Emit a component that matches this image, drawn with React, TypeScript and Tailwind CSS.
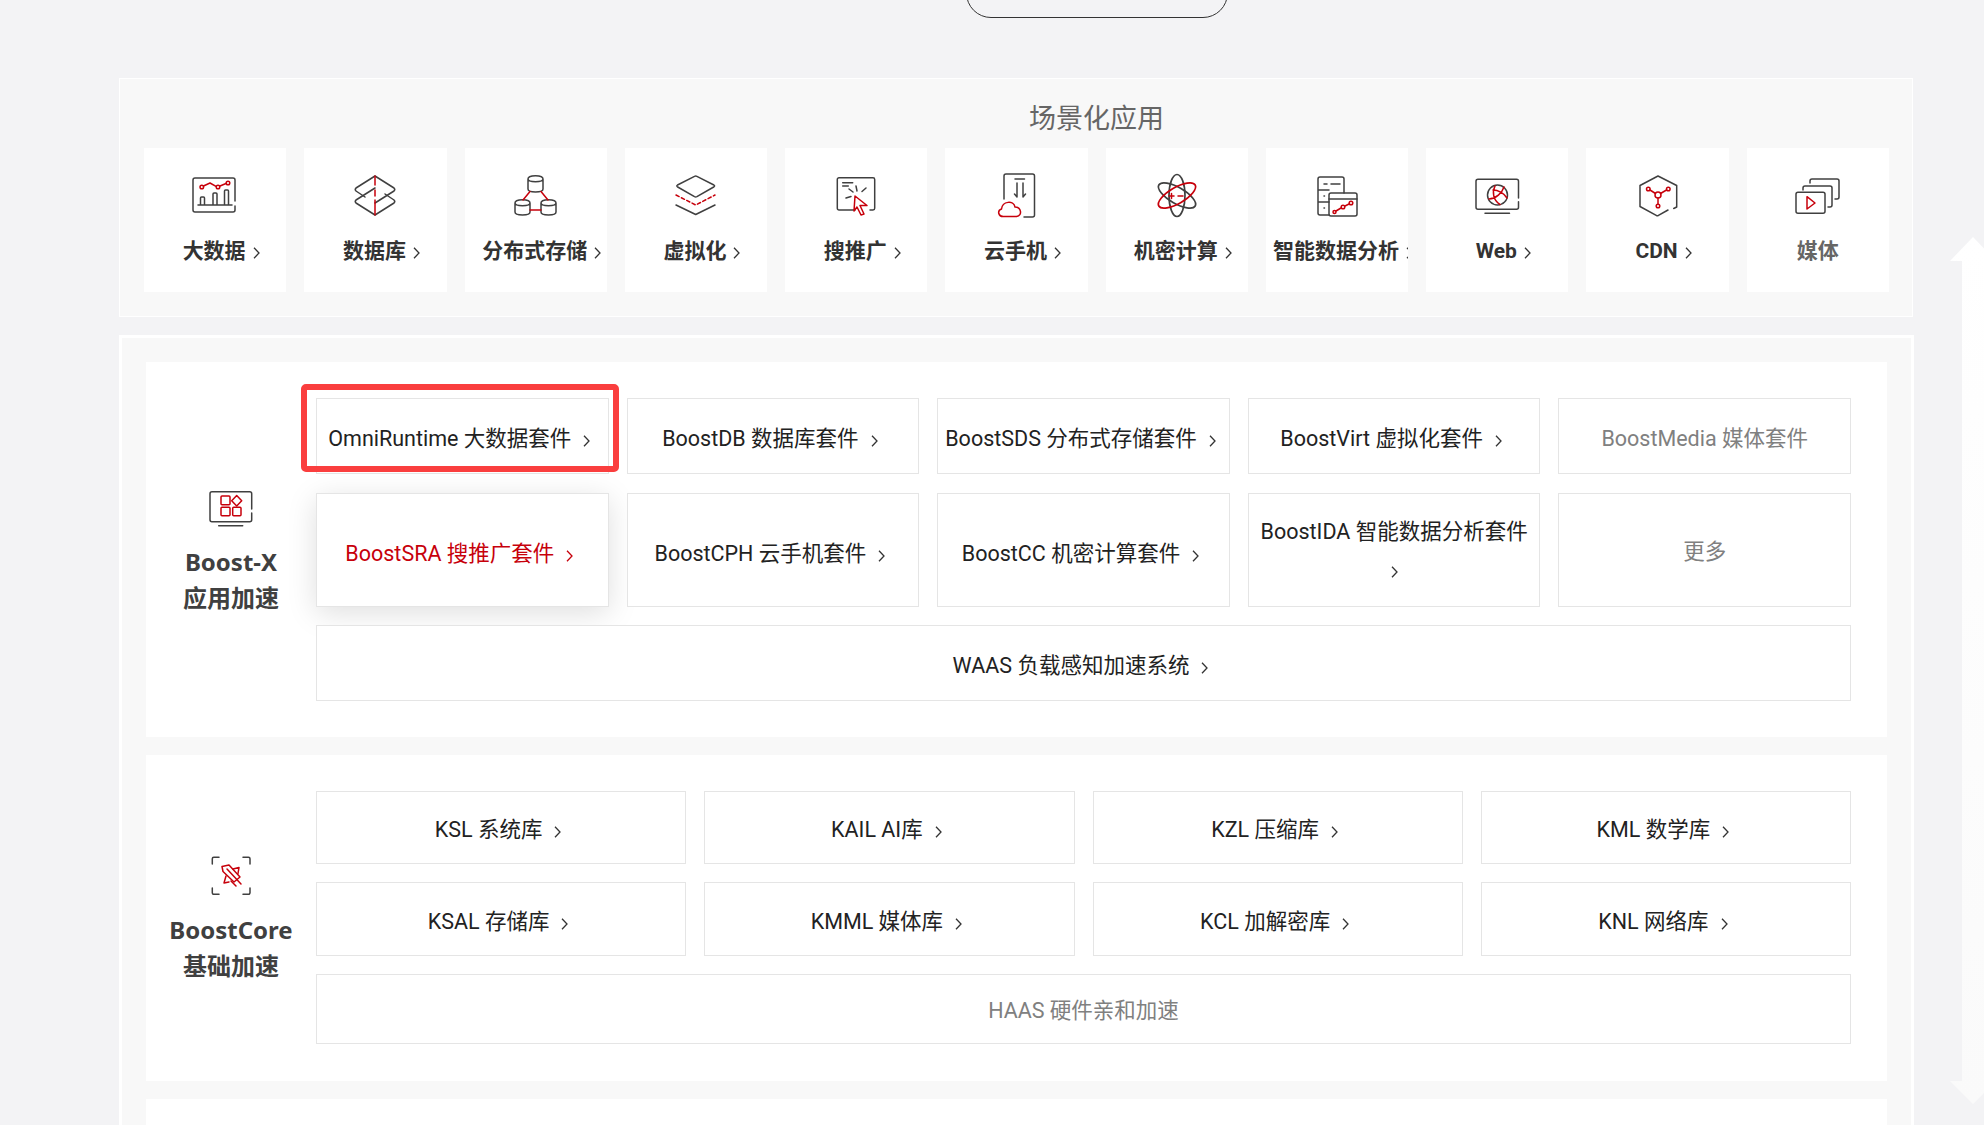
import type { ReactNode } from "react";

const DARK = "#404040";
const RED = "#c7000b";

function Icon({ children }: { children: ReactNode }) {
  return (
    <svg width="48" height="48" viewBox="0 0 48 48" fill="none" stroke={DARK} strokeWidth="1.5" strokeLinecap="round" strokeLinejoin="round">
      {children}
    </svg>
  );
}

const icons: Record<string, ReactNode> = {
  bigdata: (
    <Icon>
      <path d="M44 30V9a2 2 0 0 0-2-2H4a2 2 0 0 0-2 2v30a2 2 0 0 0 2 2h38a2 2 0 0 0 2-2v-4" />
      <path d="M7 34h34M9.500 34v-7a1 1 0 0 1 1-1h2a1 1 0 0 1 1 1v7M22 34V23a1 1 0 0 1 1-1h2a1 1 0 0 1 1 1v11M33.500 34V20a1 1 0 0 1 1-1h2a1 1 0 0 1 1 1v14" />
      <g stroke={RED}>
        <path d="M12.500 15 19 12l6 3.300M29 15l6-2.500" />
        <circle cx="10.800" cy="16" r="1.800" />
        <circle cx="27" cy="16" r="1.800" />
        <circle cx="37" cy="12" r="1.800" />
      </g>
    </Icon>
  ),
  database: (
    <Icon>
      <path d="M24 5 43 17q1.500 1.500 0 3L24 32M24 5 5 17q-1.500 1.500 0 3l9 6" />
      <path d="M24 44 43 32q1.500-1.500 0-3l-9-6M24 44 5 32q-1.500-1.500 0-3l19-12" />
      <path d="M24 5v9M24 19v6M24 29v15" stroke={RED} />
    </Icon>
  ),
  storage: (
    <Icon>
      <path d="M16 8c0-4.500 15-4.500 15 0v10c0 4-15 4-15 0zM16 8c0 3.500 15 3.500 15 0" />
      <path d="M3 32c0-4.500 15-4.500 15 0v9c0 4-15 4-15 0zM3 32c0 3.500 15 3.500 15 0" />
      <path d="M29 32c0-4.500 15-4.500 15 0v9c0 4-15 4-15 0zM29 32c0 3.500 15 3.500 15 0" />
      <path d="m11 29 7-8.500M36 29l-7-8.500M18 39h11" stroke={RED} />
    </Icon>
  ),
  virtual: (
    <Icon>
      <path d="M22.500 5.300q1.200-.6 2.400 0l17 8.700q1.500 1-.2 2l-16.800 9.600q-1.200.6-2.400 0L5.700 16q-1.700-1-.2-2z" />
      <path d="M4 24 23.700 34 43 24" stroke={RED} strokeDasharray="3.500 2.500" />
      <path d="m4 34 19.700 9.500L43 34" />
    </Icon>
  ),
  search: (
    <Icon>
      <path d="M23 39H7a1.700 1.700 0 0 1-1.700-1.700V8.400A1.700 1.700 0 0 1 7 6.700h34A1.700 1.700 0 0 1 42.700 8.400v28.900A1.700 1.700 0 0 1 41 39h-3" />
      <path d="M10.700 11.700h10M10.700 15h5.600M17 18l4 3M24 15l1 5M34 17l-4 3.500M14 27l5-1.500" />
      <path d="m23 25 12 9.500-7 0 4 8.500-3 1-4-8-3 4z" stroke={RED} />
    </Icon>
  ),
  phone: (
    <Icon>
      <path d="M12 28V5a2 2 0 0 1 2-2h26.500a2 2 0 0 1 2 2v39a2 2 0 0 1-2 2H32" />
      <path d="M23 8h9.500M25 12v14l-2.500-3M31 12v14l2.500-3" />
      <path d="M12 45.500c-6 .5-7-6-2.500-7.500 1-8 12-9 13.500-2 6 0 8 8.500 1.500 9.500z" stroke={RED} />
    </Icon>
  ),
  atom: (
    <Icon>
      <g strokeWidth="1.700">
        <ellipse cx="24" cy="24.500" rx="8" ry="21" />
        <ellipse cx="24" cy="24.500" rx="8" ry="21" transform="rotate(-60 24 24.500)" />
        <ellipse cx="24" cy="24.500" rx="8" ry="21" transform="rotate(60 24 24.500)" stroke={RED} />
      </g>
      <path d="M16 25h5M18.500 22.500v5M25 25h5" stroke={RED} />
    </Icon>
  ),
  analysis: (
    <Icon>
      <path d="M16 44H7a2 2 0 0 1-2-2V8a2 2 0 0 1 2-2h22a2 2 0 0 1 2 2v14M5 19h11M5 31h11M18 13h9M11 13h3M11 25h.500M11 37h.500" />
      <rect x="16" y="22" width="28" height="23" rx="2" />
      <path d="M16 28h28" />
      <g stroke={RED}>
        <path d="m23 40 5-3M32 35l4-2" />
        <circle cx="21.500" cy="41" r="1.500" />
        <circle cx="30" cy="36" r="1.800" />
        <circle cx="38" cy="32" r="1.800" />
      </g>
    </Icon>
  ),
  web: (
    <Icon>
      <path d="M45.500 27V10.300a2 2 0 0 0-2-2H5a2 2 0 0 0-2 2v26a2 2 0 0 0 2 2h38.500a2 2 0 0 0 2-2v-5.500M12 42.300h24.500" />
      <circle cx="24.500" cy="24" r="10" />
      <g stroke={RED}>
        <path d="M16 28c7-.5 13-6 15-12M22 15c-3 6-2 14 5 18.500M20 19c5 0 11 3 14 8" />
      </g>
    </Icon>
  ),
  cdn: (
    <Icon>
      <path d="M34 39 24 44.700a1.500 1.500 0 0 1-1.300 0L6 35.500V14.500L24 5 42.700 14.500v21.500l-3 1.500" />
      <g stroke={RED}>
        <circle cx="24" cy="24" r="3" />
        <circle cx="14.300" cy="18" r="1.800" />
        <circle cx="34.300" cy="18" r="1.800" />
        <circle cx="24" cy="35" r="1.800" />
        <path d="m16 19 5.500 3.500M32.500 19 26.500 22.500M24 27v6" />
      </g>
    </Icon>
  ),
  media: (
    <Icon>
      <rect x="2" y="21.300" width="29" height="21" rx="2" />
      <path d="M9 19v-2a2 2 0 0 1 2-2h25a2 2 0 0 1 2 2v17a2 2 0 0 1-2 2h-2" />
      <path d="M16 12v-2a2 2 0 0 1 2-2h25a2 2 0 0 1 2 2v16a2 2 0 0 1-2 2h-2" />
      <path d="M13 25.700 21 32l-8 6z" stroke={RED} />
    </Icon>
  ),
  boostx: (
    <Icon>
      <path d="M44.700 25V9.700a2 2 0 0 0-2-2H5a2 2 0 0 0-2 2v26a2 2 0 0 0 2 2h37.700a2 2 0 0 0 2-2V29M11.700 41.700h24" />
      <g stroke={RED}>
        <rect x="14" y="12" width="9" height="8.700" rx="1" />
        <rect x="14" y="23.300" width="9" height="8.400" rx="1" />
        <rect x="25.700" y="23.300" width="8.300" height="8.400" rx="1" />
        <path d="m29.700 11.500 5 5.200-5 5.200-5-5.200z" />
      </g>
    </Icon>
  ),
  boostcore: (
    <Icon>
      <path d="M5.300 12V6.800a1.500 1.500 0 0 1 1.500-1.500H12M36 5.300h5.500A1.500 1.500 0 0 1 43 6.800V12M5.300 36v4.800a1.500 1.500 0 0 0 1.500 1.500H12M36 42.300h5.500a1.500 1.500 0 0 0 1.500-1.500V36" />
      <g stroke={RED}>
        <path d="M15 14.500 22 13l11 12-6 5-11-10.500z" />
        <path d="m26 17 6-1.500-1 6M19 24l-2 7 5-1M20 17l14 15M24 29l5 5" />
      </g>
    </Icon>
  ),
};

function Chevron({ color = "#333333", className = "" }: { color?: string; className?: string }) {
  return (
    <svg width="7" height="12" viewBox="0 0 7 12" fill="none" stroke={color} strokeWidth="1.300" className={`inline-block align-[-1px] ${className}`}>
      <path d="m1 .800 5 5.200-5 5.200" />
    </svg>
  );
}

const scenes = [
  { name: "大数据", icon: "bigdata" },
  { name: "数据库", icon: "database" },
  { name: "分布式存储", icon: "storage" },
  { name: "虚拟化", icon: "virtual" },
  { name: "搜推广", icon: "search" },
  { name: "云手机", icon: "phone" },
  { name: "机密计算", icon: "atom" },
  { name: "智能数据分析", icon: "analysis", tight: true },
  { name: "Web", icon: "web" },
  { name: "CDN", icon: "cdn" },
  { name: "媒体", icon: "media", disabled: true },
];

function SceneCard({ name, icon, disabled, tight }: { name: string; icon: string; disabled?: boolean; tight?: boolean }) {
  return (
    <div className="flex h-[144px] flex-col items-center overflow-hidden bg-white pt-[23px]">
      {icons[icon]}
      <div className={`mt-[17px] w-full whitespace-nowrap text-center text-[21px] leading-[30px] font-bold ${disabled ? "text-[#666666]" : "text-[#333333]"} ${disabled ? "" : tight ? "pl-[7px]" : "pl-[12px]"}`}>
        {name}
        {!disabled && <Chevron className="ml-[7px]" />}
      </div>
    </div>
  );
}

function Item({ label, state, highlight, wrap, pad = "pt-[5px]" }: { label: string; state?: "off" | "active"; highlight?: boolean; wrap?: boolean; pad?: string }) {
  const off = state === "off";
  const active = state === "active";
  return (
    <div
      className={`relative flex items-center justify-center border border-[#e5e5e5] bg-white text-center text-[21.500px] ${pad} ${off || wrap ? "px-[8px]" : "pr-[11px] pl-[5px]"} ${wrap ? "leading-[38px]" : "leading-[28px]"} ${off ? "text-[#808080]" : active ? "text-[#c7000b] shadow-[0_6px_28px_rgba(0,0,0,0.13)]" : "text-[#222222]"}`}
    >
      {wrap ? (
        <span>
          {label}
          <br />
          <Chevron />
        </span>
      ) : (
        <span>
          {label}
          {!off && <Chevron color={active ? RED : "#333333"} className="ml-[12px]" />}
        </span>
      )}
      {highlight && (
        <div className="absolute top-[-15px] right-[-11px] bottom-[1px] left-[-16px] rounded-[5px] border-[6px] border-[#fa3e3e]" />
      )}
    </div>
  );
}

function SideLabel({ icon, title, sub }: { icon: string; title: string; sub: string }) {
  return (
    <div className="flex w-[170px] shrink-0 flex-col items-center justify-center">
      {icons[icon]}
      <div className="mt-[12px] text-center font-['Noto_Sans','Noto_Sans_CJK_SC',sans-serif] text-[24px] leading-[36px] font-bold text-[#404040]">
        <div>{title}</div>
        <div>{sub}</div>
      </div>
    </div>
  );
}

function ScrollArrow() {
  return (
    <svg width="46" height="867" viewBox="0 0 46 867" className="absolute top-[237px] left-[1950px]">
      <defs>
        <linearGradient id="arrow" x1="0" y1="0" x2="0" y2="1">
          <stop offset="0" stopColor="#ffffff" />
          <stop offset="1" stopColor="#fafafa" />
        </linearGradient>
      </defs>
      <path d="M23 0 46 24H34V844H46L23 867 0 844H12V24H0Z" fill="url(#arrow)" />
    </svg>
  );
}

export default function App() {
  return (
    <div className="relative h-[1125px] w-[1984px] overflow-hidden bg-[#f3f3f5] font-['Roboto','Noto_Sans_CJK_SC',sans-serif]">
      <div className="absolute top-[-32px] left-[966px] h-[50px] w-[262px] rounded-[26px] border border-[#333333]" />

      <div className="pt-[78px] pl-[119px]">
        <section className="h-[239px] w-[1794px] border border-white bg-[#f8f8f8] pr-[23px] pl-[24px]">
          <h2 className="h-[69px] pt-[21px] pl-[160px] text-center text-[27px] leading-[38px] text-[#666666]">场景化应用</h2>
          <div className="grid grid-cols-11 gap-x-[18px]">
            {scenes.map((s) => (
              <SceneCard key={s.name} {...s} />
            ))}
          </div>
        </section>

        <section className="mt-[18px] flex w-[1795px] flex-col gap-[18px] border-[3px] border-white bg-[#f8f8f8] px-[24px] pt-[24px]">
          <div className="flex bg-white py-[36px] pr-[36px]">
            <SideLabel icon="boostx" title="Boost-X" sub="应用加速" />
            <div className="grid flex-1 grid-cols-5 grid-rows-[76px_114px_76px] gap-x-[18px] gap-y-[18.500px]">
              <Item label="OmniRuntime 大数据套件" highlight />
              <Item label="BoostDB 数据库套件" />
              <Item label="BoostSDS 分布式存储套件" />
              <Item label="BoostVirt 虚拟化套件" />
              <Item label="BoostMedia 媒体套件" state="off" />
              <Item label="BoostSRA 搜推广套件" state="active" pad="pt-[8px]" />
              <Item label="BoostCPH 云手机套件" pad="pt-[8px]" />
              <Item label="BoostCC 机密计算套件" pad="pt-[8px]" />
              <Item label="BoostIDA 智能数据分析套件" wrap pad="pt-[3px]" />
              <Item label="更多" state="off" />
              <div className="col-span-5 grid">
                <Item label="WAAS 负载感知加速系统" />
              </div>
            </div>
          </div>

          <div className="flex bg-white pt-[36px] pr-[36px] pb-[37px]">
            <SideLabel icon="boostcore" title="BoostCore" sub="基础加速" />
            <div className="grid flex-1 grid-cols-4 grid-rows-[73px_74px_70px] gap-x-[18px] gap-y-[18px]">
              <Item label="KSL 系统库" />
              <Item label="KAIL AI库" />
              <Item label="KZL 压缩库" />
              <Item label="KML 数学库" />
              <Item label="KSAL 存储库" />
              <Item label="KMML 媒体库" />
              <Item label="KCL 加解密库" />
              <Item label="KNL 网络库" />
              <div className="col-span-4 grid">
                <Item label="HAAS 硬件亲和加速" state="off" pad="pt-[3px]" />
              </div>
            </div>
          </div>

          <div className="h-[60px] bg-white" />
        </section>
      </div>

      <ScrollArrow />
    </div>
  );
}
